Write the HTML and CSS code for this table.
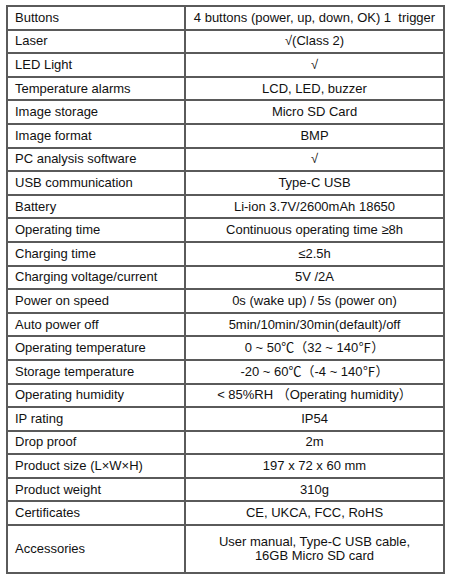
FILE: index.html
```html
<!DOCTYPE html>
<html>
<head>
<meta charset="utf-8">
<link rel="stylesheet" href="styles.css">
</head>
<body>
<table class="spec">
<tr><td class="k">Buttons</td><td class="v">4 buttons (power, up, down, OK) 1 &nbsp;trigger</td></tr>
<tr><td class="k">Laser</td><td class="v">√(Class 2)</td></tr>
<tr><td class="k">LED Light</td><td class="v">√</td></tr>
<tr><td class="k">Temperature alarms</td><td class="v">LCD, LED, buzzer</td></tr>
<tr><td class="k">Image storage</td><td class="v">Micro SD Card</td></tr>
<tr><td class="k">Image format</td><td class="v">BMP</td></tr>
<tr><td class="k">PC analysis software</td><td class="v">√</td></tr>
<tr><td class="k">USB communication</td><td class="v">Type-C USB</td></tr>
<tr><td class="k">Battery</td><td class="v">Li-ion 3.7V/2600mAh 18650</td></tr>
<tr><td class="k">Operating time</td><td class="v">Continuous operating time ≥8h</td></tr>
<tr><td class="k">Charging time</td><td class="v">≤2.5h</td></tr>
<tr><td class="k">Charging voltage/current</td><td class="v">5V /2A</td></tr>
<tr><td class="k">Power on speed</td><td class="v">0s (wake up) / 5s (power on)</td></tr>
<tr><td class="k">Auto power off</td><td class="v">5min/10min/30min(default)/off</td></tr>
<tr><td class="k">Operating temperature</td><td class="v">0 ~ 50℃（32 ~ 140℉）</td></tr>
<tr><td class="k">Storage temperature</td><td class="v">-20 ~ 60℃（-4 ~ 140℉）</td></tr>
<tr><td class="k">Operating humidity</td><td class="v">&lt; 85%RH （Operating humidity）</td></tr>
<tr><td class="k">IP rating</td><td class="v">IP54</td></tr>
<tr><td class="k">Drop proof</td><td class="v">2m</td></tr>
<tr><td class="k">Product size (L×W×H)</td><td class="v">197 x 72 x 60 mm</td></tr>
<tr><td class="k">Product weight</td><td class="v">310g</td></tr>
<tr><td class="k">Certificates</td><td class="v">CE, UKCA, FCC, RoHS</td></tr>
<tr class="tall"><td class="k">Accessories</td><td class="v">User manual, Type-C USB cable,<br>16GB Micro SD card</td></tr>
</table>
</body>
</html>
```
FILE: styles.css
```css
html, body {
  margin: 0;
  padding: 0;
  background: #ffffff;
}
body {
  padding: 5px 0 0 6px;
  font-family: "Liberation Sans", Arial, "Noto Sans CJK SC", sans-serif;
  font-size: 13px;
  color: #111;
}
.spec {
  border-collapse: collapse;
  width: 439px;
  table-layout: fixed;
}
.spec tr {
  height: 23.6px;
}
.spec tr.tall {
  height: 48px;
}
.spec td {
  border: 2px solid #5a5a5a;
  padding: 0 0 0 7px;
  line-height: 14px;
  white-space: nowrap;
  vertical-align: middle;
}
.spec td.k {
  width: 169px;
}
.spec td.v {
  text-align: center;
  padding: 0;
}
```
